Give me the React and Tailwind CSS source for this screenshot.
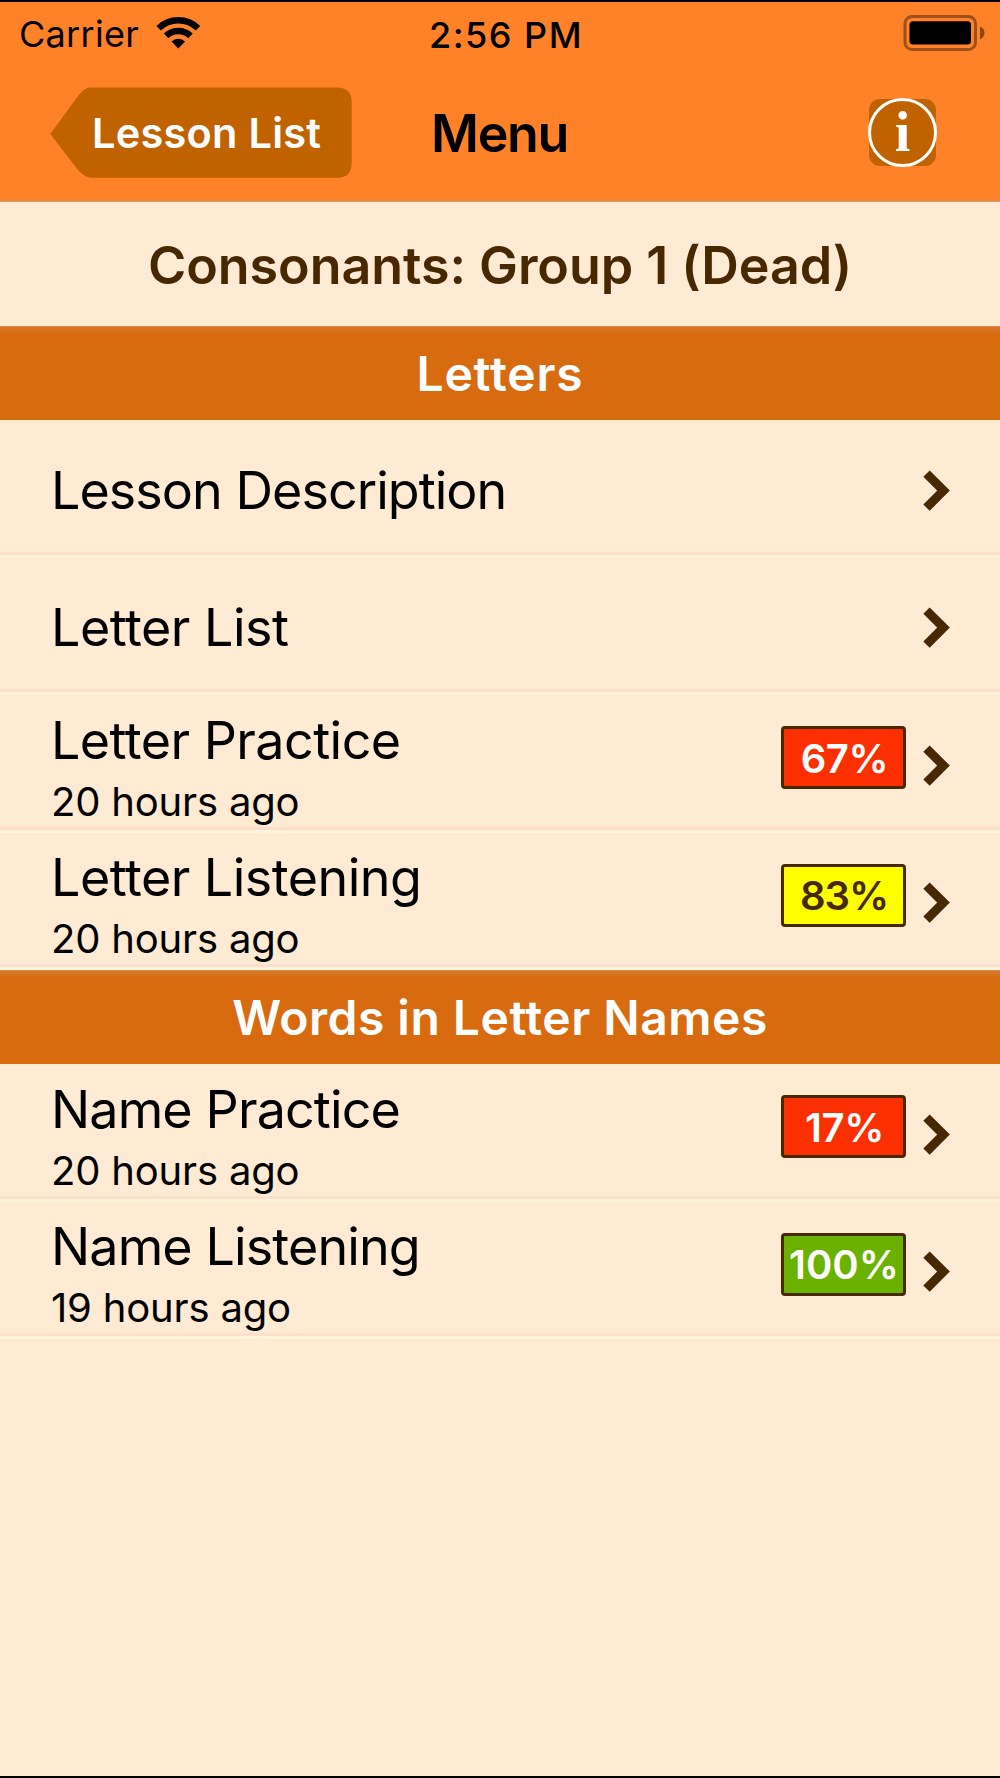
const sections = [
  {
    title: "Letters",
    titleStyle: "tracking-[0.85px]",
    items: [
      { name: "Lesson Description", nameStyle: "tracking-[-0.95px]" },
      { name: "Letter List", nameStyle: "tracking-[-0.49px]" },
      { name: "Letter Practice", nameStyle: "tracking-[-0.55px]", time: "20 hours ago", score: 67 },
      { name: "Letter Listening", nameStyle: "tracking-[-0.52px]", time: "20 hours ago", score: 83 },
    ],
  },
  {
    title: "Words in Letter Names",
    titleStyle: "tracking-[0.5px]",
    items: [
      { name: "Name Practice", nameStyle: "tracking-[-0.86px]", time: "20 hours ago", score: 17 },
      { name: "Name Listening", nameStyle: "tracking-[-0.87px]", time: "19 hours ago", score: 100 },
    ],
  },
];

const scoreStyle = (score) => {
  if (score === 100) return "bg-[#6bb100] text-white pl-px";
  if (score >= 80) return "bg-[#ffff00] text-[#482800] tracking-[-1px] pl-px";
  return "bg-[#fb2f00] text-white tracking-[-0.4px] pl-0.5";
};

function WifiIcon() {
  return (
    <svg width="45" height="32" viewBox="0 0 45 32" fill="none" stroke="black">
      <path d="M2.6 11.2A28.3 28.3 0 0 1 42 11.2" strokeWidth="6.4" />
      <path d="M10.1 18.9A17.5 17.5 0 0 1 34.5 18.9" strokeWidth="6.4" />
      <path d="M22.3 31.5L15.5 24.5A9.8 9.8 0 0 1 29.1 24.5Z" fill="black" stroke="none" />
    </svg>
  );
}

function BatteryIcon() {
  return (
    <svg width="82" height="36" viewBox="0 0 82 36" fill="none">
      <rect x="2" y="1.5" width="70.5" height="33" rx="7" stroke="#9e501a" strokeWidth="3" />
      <rect x="6.5" y="6.2" width="61.5" height="23.3" rx="3.5" fill="black" />
      <path d="M77 11.5Q81.5 13.5 81.5 17.8T77 24.5Z" fill="#8a4617" />
    </svg>
  );
}

function Chevron() {
  return (
    <svg className="mt-[49.5px] ml-[17px] shrink-0" width="27" height="42" viewBox="0 0 27 42" fill="none">
      <path d="M3.5 3.6L20.5 20.6L3.5 37.6" stroke="#482800" strokeWidth="9" />
    </svg>
  );
}

function MenuRow({ item }) {
  return (
    <div className="h-[137.5px] flex flex-col">
      <div className="flex-1 flex items-start pl-[51px] pr-[50px]">
        <div className={item.time ? "flex-1 pt-[15.5px]" : "flex-1 pt-[40.5px]"}>
          <p className={`text-[52px] leading-[60px] ${item.nameStyle}`}>{item.name}</p>
          {item.time && (
            <p className="mt-[7px] text-[40px] leading-[48px] tracking-[-0.18px]">{item.time}</p>
          )}
        </div>

        {item.score !== undefined && (
          <div
            className={`mt-[31px] pt-0.5 w-[125px] h-[63px] flex items-center justify-center border-3 border-[#482800] rounded-[4px] text-[40px] leading-none font-semibold ${scoreStyle(item.score)}`}
          >
            {item.score}%
          </div>
        )}
        <Chevron />
      </div>

      {/* DIVIDER */}
      <div className="h-[3px] shrink-0 bg-[#ffdfcc]" />
      <div className="h-[3px] shrink-0 bg-[#fff3db]" />
    </div>
  );
}

export default function App() {
  return (
    <div className="w-[1000px] h-[1778px] flex flex-col overflow-hidden border-y-2 border-black bg-[#ffead3] font-['Inter',sans-serif] text-black">

      {/* STATUS BAR + NAV */}
      <div className="shrink-0 bg-[#ff8228] border-b border-[#c9a184]">
        <div className="h-[64px] grid grid-cols-[1fr_auto_1fr] items-center pl-[19px] pr-[15px] text-[36px] leading-none">
          <div className="flex items-center gap-[17px]">
            <span className="tracking-[0.3px]">Carrier</span>
            <div className="-mt-0.5">
              <WifiIcon />
            </div>
          </div>
          <p className="pl-2 pt-px font-medium tracking-[1.5px]">2:56 PM</p>
          <div className="flex justify-end -mt-0.5">
            <BatteryIcon />
          </div>
        </div>

        <div className="h-[135px] grid grid-cols-[1fr_auto_1fr] items-center pb-[3px] pl-[50px] pr-[63px]">
          <button className="relative w-[302px] h-[91px] pt-[3px] pl-[42px] text-left text-white text-[41.5px] leading-none font-semibold tracking-[0.25px]">
            <svg className="absolute inset-0" width="302" height="91" viewBox="0 0 302 91" fill="#c16200">
              <path d="M0.3 47L28 9Q34 0.4 40 0.4H287Q301.7 0.4 301.7 15V76Q301.7 90.8 287 90.8H40Q34 89.5 28 83Z" />
            </svg>
            <span className="relative">Lesson List</span>
          </button>
          <h1 className="pl-3 pt-[3px] text-[52px] leading-none font-semibold tracking-[-1.37px]">Menu</h1>
          <button className="justify-self-end size-[69px] relative flex items-center justify-center">
            <span className="absolute inset-[1px] rounded-[11px] bg-[#c16200]" />
            <span className="absolute inset-0 rounded-full border-3 border-white" />
            <span className="relative font-['Liberation_Serif',serif] font-bold text-[56px] leading-none text-white">i</span>
          </button>
        </div>
      </div>

      {/* LESSON TITLE */}
      <div className="h-[124px] shrink-0 flex items-center justify-center pt-1">
        <h2 className="text-[52px] leading-none font-semibold text-[#482800] tracking-[-0.05px]">
          Consonants: Group 1 (Dead)
        </h2>
      </div>

      {sections.map((section) => (
        <div key={section.title} className="shrink-0">
          <div className="h-[94px] flex items-center justify-center pt-px border-t border-[#d98a48] bg-[linear-gradient(#d9792c,#d86a10_7px)]">
            <h3 className={`text-[48px] leading-none font-semibold text-white ${section.titleStyle}`}>
              {section.title}
            </h3>
          </div>
          {section.items.map((item) => (
            <MenuRow key={item.name} item={item} />
          ))}
        </div>
      ))}
    </div>
  );
}
